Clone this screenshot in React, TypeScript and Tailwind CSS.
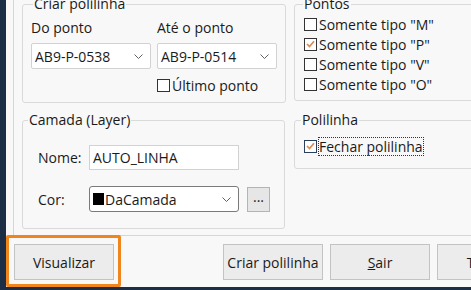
import React from "react";

function Chevron() {
  return (
    <svg width="9" height="5" viewBox="0 0 9 5" className="shrink-0">
      <path d="M0.5 0.5 L4.5 4.5 L8.5 0.5" stroke="#606060" strokeWidth="1" fill="none" />
    </svg>
  );
}

function Combo({ value, width, dark }: { value: React.ReactNode; width: string; dark?: boolean }) {
  return (
    <div
      className={`${width} h-[26px] bg-white border flex items-center justify-between pl-[3px] pr-[7px] ${
        dark ? "border-[#7a7a7a] rounded-[3px]" : "border-[#d2d2d2] rounded-[2px]"
      }`}
    >
      {value}
      <Chevron />
    </div>
  );
}

function CheckBox({
  label,
  checked,
  focused,
}: {
  label: string;
  checked?: boolean;
  focused?: boolean;
}) {
  return (
    <div className="flex items-center h-[20px]">
      <span
        className={`w-[13px] h-[13px] border bg-white flex items-center justify-center shrink-0 ${
          focused ? "border-[#2a3f5c]" : "border-[#333333]"
        }`}
      >
        {checked && (
          <svg width="9" height="8" viewBox="0 0 9 8">
            <path d="M1 4 L3.5 6.5 L8 1.2" stroke="#d98a55" strokeWidth="1.7" fill="none" />
          </svg>
        )}
      </span>
      <span
        className={`ml-[2px] leading-[17px] ${
          focused ? "outline outline-1 outline-dotted outline-[#333] px-[0px]" : ""
        }`}
      >
        {label}
      </span>
    </div>
  );
}

function Button({ children, width }: { children: React.ReactNode; width: string }) {
  return (
    <div
      className={`${width} h-[36px] shrink-0 bg-[#ececec] border border-[#c3c3c3] flex items-center justify-center`}
    >
      {children}
    </div>
  );
}

export default function App() {
  return (
    <div className="w-[471px] h-[290px] overflow-hidden bg-[#1b2e46] flex flex-col font-['Segoe_UI','Open_Sans',sans-serif] text-[14px] text-[#1a1a1a]">
      <div className="flex-1 ml-[6px] bg-[#f8f8f8] relative flex flex-col min-h-0">
        {/* Tab page */}
        <div className="h-[236px] ml-[7px] border-l border-b border-[#d6d6d6] flex gap-[9px] pl-[8px] overflow-hidden">
          {/* Left column */}
          <div className="w-[263px] shrink-0 flex flex-col">
            <fieldset className="h-[109px] mt-[-6px] border border-[#dadada] rounded-[3px] px-[8px]">
              <legend className="ml-[2px] px-[1px] leading-[20px]">Criar polilinha</legend>
              <div className="flex gap-[6px]">
                <div className="flex flex-col">
                  <span className="mt-[5px] leading-[18px]">Do ponto</span>
                  <div className="mt-[6px]">
                    <Combo width="w-[120px]" value={<span>AB9-P-0538</span>} />
                  </div>
                </div>
                <div className="flex flex-col">
                  <span className="mt-[5px] leading-[18px]">Até o ponto</span>
                  <div className="mt-[6px]">
                    <Combo width="w-[120px]" value={<span>AB9-P-0514</span>} />
                  </div>
                  <div className="mt-[6px]">
                    <CheckBox label="Último ponto" />
                  </div>
                </div>
              </div>
            </fieldset>

            <fieldset className="h-[119px] mt-[7px] border border-[#dadada] rounded-[3px] pl-[15px] pr-[8px]">
              <legend className="ml-[-10px] px-[1px] leading-[20px]">Camada (Layer)</legend>
              <div className="flex items-center mt-[15px]">
                <span className="w-[51px]">Nome:</span>
                <div className="w-[150px] h-[25px] bg-white border border-[#d2d2d2] flex items-center pl-[3px]">
                  AUTO_LINHA
                </div>
              </div>
              <div className="flex items-center mt-[16px]">
                <span className="w-[51px]">Cor:</span>
                <Combo
                  width="w-[150px]"
                  dark
                  value={
                    <span className="flex items-center">
                      <span className="w-[11px] h-[12px] bg-black mr-[1px]" />
                      DaCamada
                    </span>
                  }
                />
                <div className="ml-[8px] w-[23px] h-[25px] bg-[#e6e6e6] border border-[#b4b4b4] flex items-center justify-center leading-none pb-[4px]">
                  ...
                </div>
              </div>
            </fieldset>
          </div>

          {/* Right column */}
          <div className="w-[200px] shrink-0 flex flex-col">
            <fieldset className="h-[107px] mt-[-6px] border border-[#dadada] rounded-[3px] px-[9px]">
              <legend className="ml-[-1px] px-[1px] leading-[20px]">Pontos</legend>
              <CheckBox label={'Somente tipo "M"'} />
              <CheckBox label={'Somente tipo "P"'} checked />
              <CheckBox label={'Somente tipo "V"'} />
              <CheckBox label={'Somente tipo "O"'} />
            </fieldset>

            <fieldset className="h-[59px] mt-[9px] border border-[#dadada] rounded-[3px] px-[9px]">
              <legend className="ml-[-3px] px-[1px] leading-[20px]">Polilinha</legend>
              <div className="mt-[6px]">
                <CheckBox label="Fechar polilinha" checked focused />
              </div>
            </fieldset>
          </div>
        </div>

        {/* Buttons */}
        <div className="flex mt-[8px] overflow-hidden">
          <div className="ml-[8px]">
            <Button width="w-[100px]">Visualizar</Button>
          </div>
          <div className="ml-[109px] flex gap-[7px]">
            <Button width="w-[100px]">Criar polilinha</Button>
            <Button width="w-[100px]">
              <span>
                <span className="underline">S</span>air
              </span>
            </Button>
            <Button width="w-[100px]">Testar</Button>
          </div>
        </div>

        {/* Highlight */}
        <div className="absolute left-0 top-[235px] w-[115px] bottom-0 border-[3px] border-[#f0851d] rounded-[2px]" />
      </div>
      <div className="h-[3px] shrink-0" />
    </div>
  );
}
